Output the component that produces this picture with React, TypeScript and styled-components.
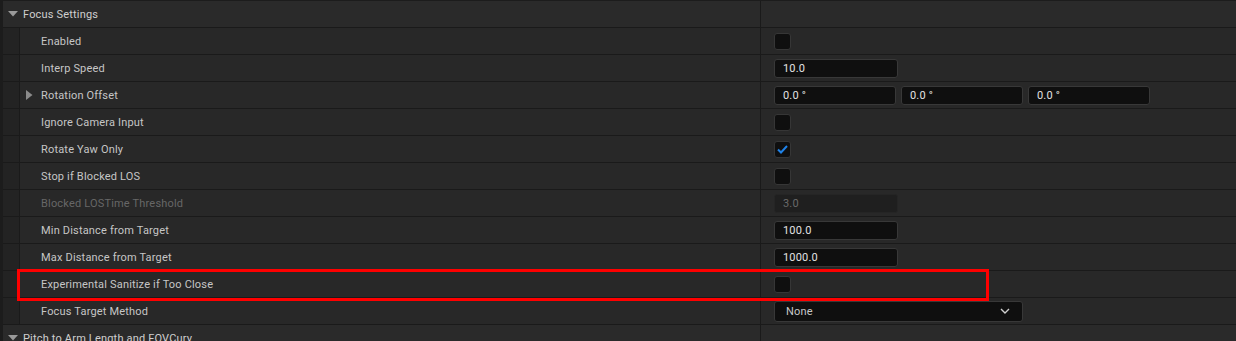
import React from 'react';
import styled, { createGlobalStyle, css } from 'styled-components';

const Global = createGlobalStyle`
  html, body {
    margin: 0;
    padding: 0;
    background: #1c1c1c;
    overflow: hidden;
  }
  body {
    font-family: Roboto, 'Liberation Sans', sans-serif;
    font-size: 11px;
    letter-spacing: 0.18px;
  }
`;

const Panel = styled.div`
  position: relative;
  width: 1236px;
  height: 341px;
  padding-top: 1px;
  box-sizing: border-box;
  background: #1c1c1c;
`;

const Row = styled.div<{ $header?: boolean }>`
  display: flex;
  height: 26px;
  border-bottom: 1px solid #1a1a1a;
  margin-left: 3px;
  background: ${(p) => (p.$header ? '#2a2a2a' : '#232323')};
`;

const Indent = styled.div`
  width: 16px;
  flex: none;
  border-right: 1px solid #1a1a1a;
`;

const NameCell = styled.div<{ $header?: boolean }>`
  display: flex;
  align-items: center;
  width: ${(p) => (p.$header ? 758 : 741)}px;
  flex: none;
  background: #282828;
  box-sizing: border-box;
  padding-left: ${(p) => (p.$header ? 5 : 6)}px;
  border-right: 1px solid #1a1a1a;
  ${(p) =>
    p.$header &&
    css`
      background: #2a2a2a;
    `}
`;

const Arrow = styled.span`
  width: 15px;
  flex: none;
  display: flex;
  align-items: center;
`;

const Label = styled.span<{ $disabled?: boolean; $header?: boolean }>`
  color: ${(p) => (p.$disabled ? '#676767' : p.$header ? '#cfcfcf' : '#c6c6c6')};
  white-space: nowrap;
`;

const ValueCell = styled.div<{ $header?: boolean }>`
  flex: 1;
  display: flex;
  align-items: center;
  gap: 5px;
  padding-left: 13px;
  background: ${(p) => (p.$header ? '#2a2a2a' : '#282828')};
`;

const Check = styled.div`
  width: 15px;
  height: 15px;
  border: 1px solid #363636;
  border-radius: 3px;
  background: #0f0f0f;
  display: flex;
  align-items: center;
  justify-content: center;
`;

const Field = styled.div<{ $w: number; $disabled?: boolean }>`
  width: ${(p) => p.$w}px;
  flex: none;
  height: 19px;
  box-sizing: border-box;
  border: 1px solid ${(p) => (p.$disabled ? '#252525' : '#383838')};
  border-radius: 3px;
  background: ${(p) => (p.$disabled ? '#1f1f1f' : '#0f0f0f')};
  color: ${(p) => (p.$disabled ? '#6a6a6a' : '#e2e2e2')};
  padding-left: 8px;
  display: flex;
  align-items: center;
`;

const Combo = styled(Field)`
  height: 21px;
  padding-left: 11px;
  padding-right: 12px;
  justify-content: space-between;
  color: #c8c8c8;
`;

const Highlight = styled.div`
  position: absolute;
  left: 17px;
  top: 269px;
  width: 972px;
  height: 32px;
  box-sizing: border-box;
  border: 3px solid #ff0000;
  pointer-events: none;
`;

const DownTri = () => (
  <svg width="10" height="6" viewBox="0 0 10 6">
    <path d="M0 0 H10 L5 5.5 Z" fill="#9a9a9a" />
  </svg>
);

const RightTri = () => (
  <svg width="7" height="10" viewBox="0 0 7 10">
    <path d="M0 0 L6.5 5 L0 10 Z" fill="#8a8a8a" />
  </svg>
);

const Tick = () => (
  <svg width="11" height="9" viewBox="0 0 11 9">
    <path d="M1 4.5 L4 7.5 L10 1" stroke="#1f82e8" strokeWidth="2" fill="none" />
  </svg>
);

const Chevron = () => (
  <svg width="10" height="6" viewBox="0 0 10 6">
    <path d="M1 1 L5 5 L9 1" stroke="#d0d0d0" strokeWidth="1.4" fill="none" />
  </svg>
);

type Prop = {
  name: string;
  kind: 'check' | 'checked' | 'number' | 'vector' | 'combo';
  value?: string;
  disabled?: boolean;
  expandable?: boolean;
};

const props: Prop[] = [
  { name: 'Enabled', kind: 'check' },
  { name: 'Interp Speed', kind: 'number', value: '10.0' },
  { name: 'Rotation Offset', kind: 'vector', value: '0.0 °', expandable: true },
  { name: 'Ignore Camera Input', kind: 'check' },
  { name: 'Rotate Yaw Only', kind: 'checked' },
  { name: 'Stop if Blocked LOS', kind: 'check' },
  { name: 'Blocked LOSTime Threshold', kind: 'number', value: '3.0', disabled: true },
  { name: 'Min Distance from Target', kind: 'number', value: '100.0' },
  { name: 'Max Distance from Target', kind: 'number', value: '1000.0' },
  { name: 'Experimental Sanitize if Too Close', kind: 'check' },
  { name: 'Focus Target Method', kind: 'combo', value: 'None' },
];

function renderValue(p: Prop) {
  switch (p.kind) {
    case 'check':
      return <Check />;
    case 'checked':
      return (
        <Check>
          <Tick />
        </Check>
      );
    case 'number':
      return (
        <Field $w={124} $disabled={p.disabled}>
          {p.value}
        </Field>
      );
    case 'vector':
      return (
        <>
          <Field $w={122}>{p.value}</Field>
          <Field $w={122}>{p.value}</Field>
          <Field $w={122}>{p.value}</Field>
        </>
      );
    case 'combo':
      return (
        <Combo $w={249}>
          {p.value}
          <Chevron />
        </Combo>
      );
  }
}

const Category: React.FC<{ title: string }> = ({ title }) => (
  <Row $header>
    <NameCell $header>
      <Arrow>
        <DownTri />
      </Arrow>
      <Label $header>{title}</Label>
    </NameCell>
    <ValueCell $header />
  </Row>
);

export default function App() {
  return (
    <>
      <Global />
      <Panel>
        <Category title="Focus Settings" />
        {props.map((p) => (
          <Row key={p.name}>
            <Indent />
            <NameCell>
              <Arrow>{p.expandable && <RightTri />}</Arrow>
              <Label $disabled={p.disabled}>{p.name}</Label>
            </NameCell>
            <ValueCell>{renderValue(p)}</ValueCell>
          </Row>
        ))}
        <Category title="Pitch to Arm Length and FOVCurv" />
        <Highlight />
      </Panel>
    </>
  );
}
